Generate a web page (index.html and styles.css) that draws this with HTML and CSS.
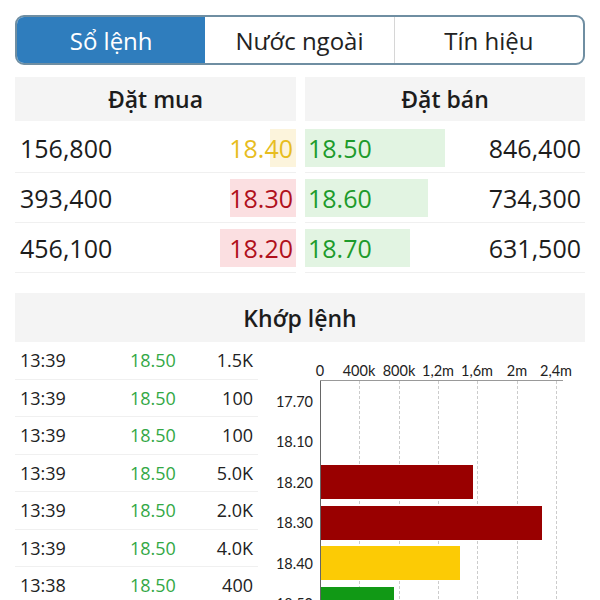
FILE: index.html
```html
<!DOCTYPE html>
<html lang="vi">
<head>
    <meta charset="UTF-8">
    <meta name="viewport" content="width=device-width, initial-scale=1.0">
    <title>Sổ lệnh</title>
    <link rel="stylesheet" href="styles.css">
</head>
<body>
    <div class="app">
        <div class="tabs">
            <div class="tab active">Sổ lệnh</div>
            <div class="tab">Nước ngoài</div>
            <div class="tab">Tín hiệu</div>
        </div>

        <div class="book">
            <div class="side buy">
                <div class="side-head">Đặt mua</div>
                <div class="row ref" style="--w: 26px"><span class="qty">156,800</span><span class="price">18.40</span></div>
                <div class="row down" style="--w: 66px"><span class="qty">393,400</span><span class="price">18.30</span></div>
                <div class="row down" style="--w: 76px"><span class="qty">456,100</span><span class="price">18.20</span></div>
            </div>
            <div class="side sell">
                <div class="side-head">Đặt bán</div>
                <div class="row up" style="--w: 140px"><span class="price">18.50</span><span class="qty">846,400</span></div>
                <div class="row up" style="--w: 123px"><span class="price">18.60</span><span class="qty">734,300</span></div>
                <div class="row up" style="--w: 105px"><span class="price">18.70</span><span class="qty">631,500</span></div>
            </div>
        </div>

        <div class="matched">
            <div class="matched-head">Khớp lệnh</div>
            <div class="trades">
                <div class="trade"><span>13:39</span><span class="t-price">18.50</span><span class="t-vol">1.5K</span></div>
                <div class="trade"><span>13:39</span><span class="t-price">18.50</span><span class="t-vol">100</span></div>
                <div class="trade"><span>13:39</span><span class="t-price">18.50</span><span class="t-vol">100</span></div>
                <div class="trade"><span>13:39</span><span class="t-price">18.50</span><span class="t-vol">5.0K</span></div>
                <div class="trade"><span>13:39</span><span class="t-price">18.50</span><span class="t-vol">2.0K</span></div>
                <div class="trade"><span>13:39</span><span class="t-price">18.50</span><span class="t-vol">4.0K</span></div>
                <div class="trade"><span>13:38</span><span class="t-price">18.50</span><span class="t-vol">400</span></div>
            </div>

            <div class="chart">
                <div class="ticks">
                    <span style="left: 0px">0</span>
                    <span style="left: 39px">400k</span>
                    <span style="left: 79px">800k</span>
                    <span style="left: 118px">1,2m</span>
                    <span style="left: 157px">1,6m</span>
                    <span style="left: 197px">2m</span>
                    <span style="left: 236px">2,4m</span>
                </div>
                <div class="plot">
                    <div class="grid">
                        <i style="left: 39px"></i>
                        <i style="left: 79px"></i>
                        <i style="left: 118px"></i>
                        <i style="left: 157px"></i>
                        <i style="left: 197px"></i>
                        <i style="left: 236px"></i>
                    </div>
                    <div class="bar-row"><span class="label">17.70</span><div class="bar"></div></div>
                    <div class="bar-row"><span class="label">18.10</span><div class="bar"></div></div>
                    <div class="bar-row"><span class="label">18.20</span><div class="bar red" style="width: 152px"></div></div>
                    <div class="bar-row"><span class="label">18.30</span><div class="bar red" style="width: 221px"></div></div>
                    <div class="bar-row"><span class="label">18.40</span><div class="bar yellow" style="width: 139px"></div></div>
                    <div class="bar-row"><span class="label">18.50</span><div class="bar green" style="width: 73px"></div></div>
                </div>
            </div>
        </div>
    </div>
</body>
</html>
```

FILE: styles.css
```css
body {
    margin: 0;
    font-family: "Open Sans", "Liberation Sans", sans-serif;
    color: #1c1c1c;
    background: #fff;
    height: 600px;
    overflow: hidden;
}
.app {
    padding: 15px;
}

/* Tabs */
.tabs {
    display: flex;
    height: 50px;
    border: 2px solid #6f8ea2;
    border-radius: 9px;
    overflow: hidden;
    box-sizing: border-box;
}
.tab {
    flex: 1;
    display: flex;
    align-items: center;
    justify-content: center;
    font-size: 24px;
    color: #222;
    border-left: 1px solid #d6d6d6;
}
.tab:first-child {
    border-left: none;
}
.tab.active {
    background-color: #2f7dbd;
    color: #fff;
}
.tab.active + .tab {
    border-left: none;
}

/* Order book */
.book {
    display: grid;
    grid-template-columns: 281px 1fr;
    gap: 9px;
    margin-top: 12px;
}
.side-head {
    height: 44px;
    background-color: #f4f4f4;
    display: flex;
    align-items: center;
    justify-content: center;
    font-size: 23px;
    font-weight: 600;
    margin-bottom: 2px;
}
.row {
    height: 49px;
    border-bottom: 1px solid #f0f0f0;
    display: flex;
    align-items: center;
    justify-content: space-between;
    font-size: 25px;
    background-repeat: no-repeat;
    background-size: var(--w) 38px;
}
.buy .row {
    padding-left: 5px;
    padding-right: 3px;
    background-position: right center;
}
.sell .row {
    padding-left: 3px;
    padding-right: 4px;
    background-position: left center;
}
.row.ref {
    background-image: linear-gradient(#fcf4dc, #fcf4dc);
}
.row.ref .price {
    color: #e7bd1f;
}
.row.down {
    background-image: linear-gradient(#fbdfe1, #fbdfe1);
}
.row.down .price {
    color: #b0101c;
}
.row.up {
    background-image: linear-gradient(#e2f4e2, #e2f4e2);
}
.row.up .price {
    color: #1d9b2b;
}

/* Matched orders */
.matched {
    display: grid;
    grid-template-columns: 243px 1fr;
    margin-top: 20px;
}
.matched-head {
    grid-column: 1 / -1;
    height: 49px;
    background-color: #f4f4f4;
    display: flex;
    align-items: center;
    justify-content: center;
    font-size: 23px;
    font-weight: 600;
}
.trade {
    display: grid;
    grid-template-columns: 110px 1fr auto;
    align-items: center;
    height: 36.5px;
    border-bottom: 1px solid #f0f0f0;
    padding: 0 5px;
    font-size: 18px;
    color: #222;
}
.t-price {
    color: #33a845;
}

/* Volume chart */
.chart {
    padding-left: 62px;
    font-family: Lato, "Open Sans", sans-serif;
    font-size: 14.5px;
    color: #222;
}
.ticks {
    position: relative;
    height: 38px;
}
.ticks span {
    position: absolute;
    bottom: 1px;
    transform: translateX(-50%);
    white-space: nowrap;
}
.plot {
    position: relative;
    width: 243px;
    border-top: 1px solid #999;
}
.grid i {
    position: absolute;
    top: 0;
    bottom: 0;
    border-left: 1px dashed #ccc;
}
.bar-row {
    position: relative;
    height: 40.5px;
    display: flex;
    align-items: center;
    border-left: 1px solid #666;
}
.label {
    position: absolute;
    right: 100%;
    margin-right: 8px;
    white-space: nowrap;
}
.bar {
    height: 34px;
    position: relative;
}
.bar.red {
    background-color: #990000;
}
.bar.yellow {
    background-color: #fccb05;
}
.bar.green {
    background-color: #119915;
}
```
